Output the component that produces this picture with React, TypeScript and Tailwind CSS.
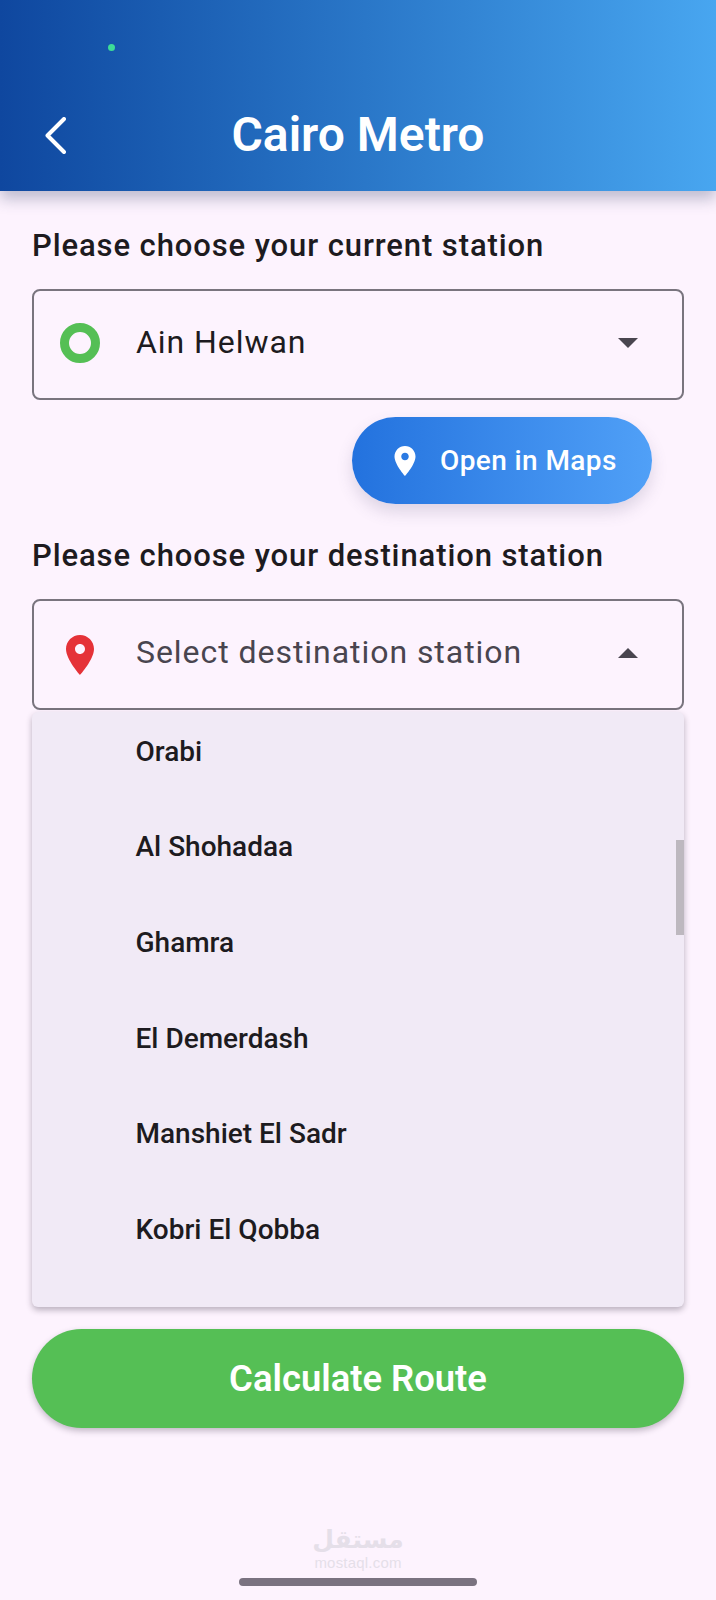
const PIN =
  "M12 2C8.13 2 5 5.13 5 9c0 5.25 7 13 7 13s7-7.75 7-13c0-3.87-3.13-7-7-7zm0 9.5c-1.38 0-2.5-1.12-2.5-2.5s1.12-2.5 2.5-2.5 2.5 1.12 2.5 2.5-1.12 2.5-2.5 2.5z";

const STATIONS = ["Orabi", "Al Shohadaa", "Ghamra", "El Demerdash", "Manshiet El Sadr", "Kobri El Qobba"];

function PinIcon({ className }: { className: string }) {
  return (
    <svg viewBox="0 0 24 24" className={className} fill="currentColor">
      <path d={PIN} />
    </svg>
  );
}

function Caret({ up }: { up?: boolean }) {
  return (
    <svg viewBox="0 0 20 10" className="w-[20px] h-[10px] text-[#49454f]" fill="currentColor">
      <path d={up ? "M0 10L10 0L20 10Z" : "M0 0L10 10L20 0Z"} />
    </svg>
  );
}

function Label({ children }: { children: string }) {
  return <p className="text-[31px] leading-[36px] font-medium tracking-[0.9px] text-[#1d1b20]">{children}</p>;
}

function Field({ icon, text, muted, up }: { icon: React.ReactNode; text: string; muted?: boolean; up?: boolean }) {
  return (
    <div className="h-[111px] flex items-center border-2 border-[#79747e] rounded-[8px] pr-[44px] pb-[3px]">
      <div className="w-[101px] flex justify-center shrink-0 pr-[10px]">{icon}</div>
      <span className={`flex-1 text-[32px] tracking-[0.95px] pb-[2px] pl-[1px] ${muted ? "text-[#49454f]" : "text-[#1d1b20]"}`}>{text}</span>
      <Caret up={up} />
    </div>
  );
}

export default function App() {
  return (
    <div className="relative w-[716px] h-[1600px] overflow-hidden bg-[#fdf3fe] font-['Roboto',sans-serif]">
      <header className="relative h-[191px] bg-gradient-to-r from-[#0f479f] to-[#48a6f0] shadow-[0_8px_14px_rgba(60,70,110,0.32)]">
        <span className="absolute left-[108px] top-[44px] w-[7px] h-[7px] rounded-full bg-[#3ddc97]" />
        <svg
          viewBox="0 0 22 37"
          className="absolute left-[44px] top-[117px] w-[22px] h-[37px] text-white"
          fill="none"
          stroke="currentColor"
          strokeWidth={4}
          strokeLinecap="round"
          strokeLinejoin="round"
        >
          <path d="M20 2L3.5 18.5L20 35" />
        </svg>
        <h1 className="pt-[108px] text-center text-[48px] leading-[54px] font-semibold text-white">Cairo Metro</h1>
      </header>

      <main className="px-[32px] pt-[37px]">
        <Label>Please choose your current station</Label>
        <div className="mt-[25px]">
          <Field
            text="Ain Helwan"
            icon={<span className="block w-[40px] h-[40px] rounded-full border-[9px] border-[#55bf55]" />}
          />
        </div>
        <div className="flex justify-end pr-[32px] mt-[17px]">
          <button className="h-[87px] w-[300px] flex items-center gap-[17px] pl-[36px] rounded-full bg-gradient-to-r from-[#2372de] to-[#50a0f7] text-white shadow-[0_8px_16px_rgba(80,70,110,0.18)]">
            <PinIcon className="w-[36px] h-[36px] shrink-0 -ml-[1px]" />
            <span className="text-[28px] font-medium tracking-[0.4px]">Open in Maps</span>
          </button>
        </div>
        <div className="mt-[34px]">
          <Label>Please choose your destination station</Label>
        </div>
        <div className="relative mt-[25px]">
          <Field
            text="Select destination station"
            muted
            up
            icon={<PinIcon className="w-[48px] h-[48px] mt-[4px] text-[#e53238]" />}
          />
          <div className="absolute z-10 left-0 right-0 top-[113px] h-[595px] overflow-hidden rounded-[6px] bg-[#f1eaf6] shadow-[0_3px_6px_rgba(40,30,50,0.32)]">
            <ul className="-mt-[8px]">
              {STATIONS.map((s) => (
                <li key={s} className="h-[95.6px] flex items-center pl-[103.5px] text-[28px] font-medium text-[#1d1b20]">
                  {s}
                </li>
              ))}
            </ul>
            <div className="absolute right-0 top-[128px] w-[8px] h-[95px] bg-[#bdb8bf]" />
          </div>
        </div>
        <button className="mt-[619px] w-[652px] h-[99px] rounded-full bg-[#55bf55] text-white text-[36.4px] font-semibold pt-[1px] shadow-[0_3px_6px_rgba(40,30,50,0.28)]">
          Calculate Route
        </button>
      </main>

      <div className="absolute left-[315px] top-[1524px] w-[86px] flex flex-col items-center text-[#e5dfe9] select-none">
        <span className="font-['DejaVu_Sans',sans-serif] font-bold text-[25px] leading-[32px]">مستقل</span>
        <span className="font-['Liberation_Sans',sans-serif] text-[15px] leading-[14px] tracking-[0.2px]">mostaql.com</span>
      </div>
      <div className="absolute left-[239px] top-[1578px] w-[238px] h-[8px] rounded-full bg-[#7a7280]" />
    </div>
  );
}
